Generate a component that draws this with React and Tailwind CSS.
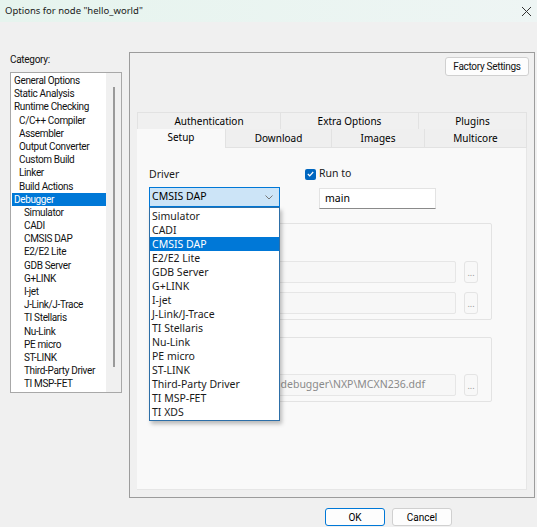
import React from 'react';

const categories = [
  ['General Options', 0],
  ['Static Analysis', 0],
  ['Runtime Checking', 0],
  ['C/C++ Compiler', 1],
  ['Assembler', 1],
  ['Output Converter', 1],
  ['Custom Build', 1],
  ['Linker', 1],
  ['Build Actions', 1],
  ['Debugger', 0],
  ['Simulator', 2],
  ['CADI', 2],
  ['CMSIS DAP', 2],
  ['E2/E2 Lite', 2],
  ['GDB Server', 2],
  ['G+LINK', 2],
  ['I-jet', 2],
  ['J-Link/J-Trace', 2],
  ['TI Stellaris', 2],
  ['Nu-Link', 2],
  ['PE micro', 2],
  ['ST-LINK', 2],
  ['Third-Party Driver', 2],
  ['TI MSP-FET', 2],
];

const drivers = [
  'Simulator',
  'CADI',
  'CMSIS DAP',
  'E2/E2 Lite',
  'GDB Server',
  'G+LINK',
  'I-jet',
  'J-Link/J-Trace',
  'TI Stellaris',
  'Nu-Link',
  'PE micro',
  'ST-LINK',
  'Third-Party Driver',
  'TI MSP-FET',
  'TI XDS',
];

const indent = ['pl-[2px]', 'pl-[7px]', 'pl-[12px]'];

const narrow = { fontFamily: 'Roboto, "Liberation Sans", sans-serif' };

function BrowseButton() {
  return (
    <div className="flex h-[22px] w-[14px] items-center justify-center rounded-[3px] border border-[#e4e4e4] bg-[#f8f8f8] text-[9px] leading-none text-[#999]">
      ...
    </div>
  );
}

function PathField({ text = '' }) {
  return (
    <div className="flex h-[22px] min-w-0 flex-1 items-center justify-end overflow-hidden rounded-[2px] border border-[#e6e6e6] bg-[#f7f7f7] pr-[30px] text-[10.5px] whitespace-nowrap text-[#8a8a8a]">
      {text}
    </div>
  );
}

export default function App() {
  return (
    <div
      className="flex h-[527px] w-[537px] flex-col overflow-hidden bg-[#f0f0f0] text-black"
      style={{ fontFamily: '"Noto Sans", "Open Sans", sans-serif' }}
    >
      {/* title bar */}
      <div className="flex h-[22px] shrink-0 items-center justify-between bg-gradient-to-r from-[#e6f4ee] to-[#eef5f4] pl-[5px] pr-[5px]">
        <span className="text-[9.5px] text-[#1a1a1a]">Options for node "hello_world"</span>
        <svg width="11" height="11" viewBox="0 0 11 11">
          <path d="M1 1 L10 10 M10 1 L1 10" stroke="#333" strokeWidth="1" fill="none" />
        </svg>
      </div>

      <div className="flex flex-1 items-start">
        {/* category column */}
        <div className="ml-[10px] flex flex-col" style={narrow}>
          <div className="mt-[31px] h-[13px] text-[10px] leading-[13px] tracking-[-0.3px] text-[#111]">Category:</div>
          <div className="mt-[6px] flex h-[321px] w-[112px] border border-[#a8a8a8] bg-white">
            <div className="flex min-w-0 flex-1 flex-col overflow-hidden pt-[1px] pl-[1px]">
              {categories.map(([name, lvl]) => (
                <div
                  key={name}
                  className={[
                    'h-[13.2px] text-[10px] leading-[13.2px] tracking-[-0.35px] whitespace-nowrap',
                    indent[lvl],
                    name === 'Debugger' ? 'bg-[#0078d7] text-white' : 'text-[#111]',
                  ].join(' ')}
                >
                  {name}
                </div>
              ))}
            </div>
            <div className="flex w-[15px] shrink-0 justify-center bg-[#f0f0f0] pt-[14px]">
              <div className="h-[280px] w-[2px] bg-[#9a9a9a]" />
            </div>
          </div>
        </div>

        {/* options panel */}
        <div className="mt-[30px] ml-[7px] flex h-[446px] w-[406px] flex-col border border-[#9c9c9c] bg-[#f0f0f0]">
          <div className="mt-[4px] mr-[5px] flex justify-end">
            <div
              className="flex h-[19px] w-[84px] items-center justify-center rounded-[3px] border border-[#d0d0d0] bg-[#fdfdfd] text-[10px] tracking-[-0.3px] text-[#111]"
              style={narrow}
            >
              Factory Settings
            </div>
          </div>

          <div className="mx-[7px] mt-[36px] flex flex-col">
            {/* tab row 1 */}
            <div className="flex h-[17px] text-[10px]">
              <div className="flex w-[143px] items-center justify-center border-t border-l border-[#e2e2e2] bg-[#f0f0f0]">Authentication</div>
              <div className="flex w-[138px] items-center justify-center border-t border-l border-[#e2e2e2] bg-[#f0f0f0]">Extra Options</div>
              <div className="flex flex-1 items-center justify-center border-t border-l border-r border-[#e2e2e2] bg-[#f0f0f0]">Plugins</div>
            </div>
            {/* tab row 2 */}
            <div className="flex h-[19px] text-[10px]">
              <div className="flex w-[88px] items-center justify-center bg-[#f9f9f9] pb-[2px]">Setup</div>
              <div className="flex w-[106px] items-center justify-center border-l border-b border-[#e2e2e2] bg-[#efefef]">Download</div>
              <div className="flex w-[93px] items-center justify-center border-l border-b border-[#e2e2e2] bg-[#efefef]">Images</div>
              <div className="flex flex-1 items-center justify-center border-l border-b border-r border-[#e2e2e2] bg-[#efefef]">Multicore</div>
            </div>

            {/* tab page */}
            <div className="relative flex h-[342px] flex-col border-r border-b border-[#e6e6e6] bg-[#f9f9f9] px-[12px]">
              <div className="mt-[18px] flex">
                <div className="flex w-[156px] flex-col">
                  <div className="h-[16px] text-[10.5px] leading-[16px] text-[#1a1a1a]">Driver</div>
                  <div className="mt-[5px] flex h-[20px] w-[131px] items-center justify-between border border-[#0078d7] bg-[#cce4f7] pl-[2px] pr-[6px] text-[10.5px]">
                    <span>CMSIS DAP</span>
                    <svg width="8" height="5" viewBox="0 0 8 5">
                      <path d="M0.5 0.5 L4 4 L7.5 0.5" stroke="#777" strokeWidth="1" fill="none" />
                    </svg>
                  </div>
                </div>
                <div className="flex flex-col">
                  <div className="flex h-[16px] items-center">
                    <div className="flex h-[11px] w-[11px] items-center justify-center rounded-[2px] bg-[#0067c0]">
                      <svg width="7" height="6" viewBox="0 0 7 6">
                        <path d="M0.8 3 L2.7 4.8 L6.2 1" stroke="#fff" strokeWidth="1.2" fill="none" />
                      </svg>
                    </div>
                    <span className="ml-[3px] text-[10.5px] text-[#1a1a1a]">Run to</span>
                  </div>
                  <div className="mt-[6px] ml-[14px] flex h-[21px] w-[117px] items-center border border-[#e3e3e3] border-b-[#8a8a8a] bg-white pl-[5px] text-[10.5px]">
                    main
                  </div>
                </div>
              </div>

              {/* group box 1 */}
              <div className="mt-[14px] flex h-[97px] w-[343px] flex-col gap-[9px] rounded-[2px] border border-[#e3e3e3] pt-[37px] pl-[8px]">
                <div className="flex items-center gap-[8px] pr-[13px]">
                  <PathField />
                  <BrowseButton />
                </div>
                <div className="flex items-center gap-[8px] pr-[13px]">
                  <PathField />
                  <BrowseButton />
                </div>
              </div>

              {/* group box 2 */}
              <div className="mt-[17px] flex h-[65px] w-[343px] flex-col rounded-[2px] border border-[#e3e3e3] pt-[36px] pl-[8px]">
                <div className="flex items-center gap-[8px] pr-[13px]">
                  <PathField text="debugger\NXP\MCXN236.ddf" />
                  <BrowseButton />
                </div>
              </div>

              {/* open driver list */}
              <div className="absolute top-[59px] left-[12px] flex w-[131px] flex-col border border-[#2d6fa8] bg-white py-[1px] shadow-[2px_3px_4px_rgba(0,0,0,0.25)]">
                {drivers.map((d) => (
                  <div
                    key={d}
                    className={[
                      'h-[14px] pl-[2px] text-[10.5px] leading-[14px] whitespace-nowrap',
                      d === 'CMSIS DAP' ? 'bg-[#0078d7] text-white' : 'text-[#1a1a1a]',
                    ].join(' ')}
                  >
                    {d}
                  </div>
                ))}
              </div>
            </div>
          </div>
        </div>
      </div>

      {/* dialog buttons */}
      <div className="flex h-[29px] shrink-0 gap-[7px] pt-[10px] pl-[325px]" style={narrow}>
        <div className="flex h-[18px] w-[60px] items-center justify-center rounded-[3px] border border-[#0078d7] bg-[#fdfdfd] text-[10px]">
          OK
        </div>
        <div className="flex h-[18px] w-[60px] items-center justify-center rounded-[3px] border border-[#d0d0d0] bg-[#fdfdfd] text-[10px]">
          Cancel
        </div>
      </div>
    </div>
  );
}
